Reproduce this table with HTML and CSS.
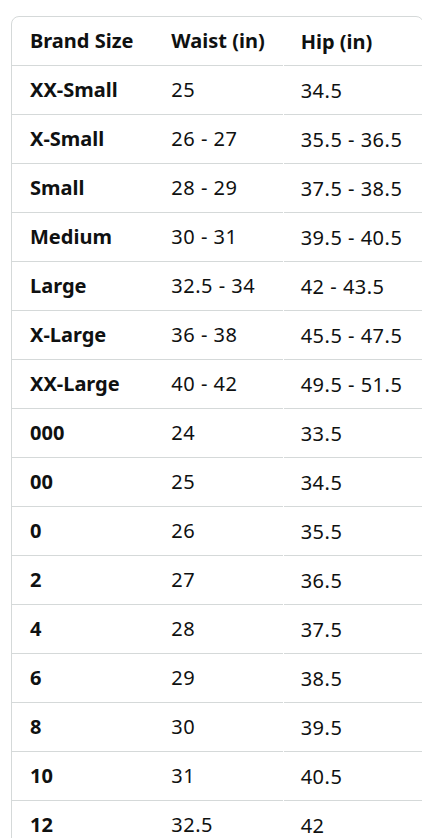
FILE: index.html
```html
<!DOCTYPE html>
<html>
<head>
<meta charset="utf-8">
<link rel="stylesheet" href="styles.css">
</head>
<body>
<div class="page">
  <div class="scroller">
    <table class="size-table">
      <thead>
        <tr><th class="c1">Brand Size</th><th class="c2">Waist (in)</th><th class="c3">Hip (in)</th></tr>
      </thead>
      <tbody>
        <tr><th class="c1">XX-Small</th><td class="c2">25</td><td class="c3">34.5</td></tr>
        <tr><th class="c1">X-Small</th><td class="c2">26 - 27</td><td class="c3">35.5 - 36.5</td></tr>
        <tr><th class="c1">Small</th><td class="c2">28 - 29</td><td class="c3">37.5 - 38.5</td></tr>
        <tr><th class="c1">Medium</th><td class="c2">30 - 31</td><td class="c3">39.5 - 40.5</td></tr>
        <tr><th class="c1">Large</th><td class="c2">32.5 - 34</td><td class="c3">42 - 43.5</td></tr>
        <tr><th class="c1">X-Large</th><td class="c2">36 - 38</td><td class="c3">45.5 - 47.5</td></tr>
        <tr><th class="c1">XX-Large</th><td class="c2">40 - 42</td><td class="c3">49.5 - 51.5</td></tr>
        <tr><th class="c1">000</th><td class="c2">24</td><td class="c3">33.5</td></tr>
        <tr><th class="c1">00</th><td class="c2">25</td><td class="c3">34.5</td></tr>
        <tr><th class="c1">0</th><td class="c2">26</td><td class="c3">35.5</td></tr>
        <tr><th class="c1">2</th><td class="c2">27</td><td class="c3">36.5</td></tr>
        <tr><th class="c1">4</th><td class="c2">28</td><td class="c3">37.5</td></tr>
        <tr><th class="c1">6</th><td class="c2">29</td><td class="c3">38.5</td></tr>
        <tr><th class="c1">8</th><td class="c2">30</td><td class="c3">39.5</td></tr>
        <tr><th class="c1">10</th><td class="c2">31</td><td class="c3">40.5</td></tr>
        <tr><th class="c1">12</th><td class="c2">32.5</td><td class="c3">42</td></tr>
      </tbody>
    </table>
  </div>
</div>
</body>
</html>
```

FILE: styles.css
```css
html, body {
  margin: 0;
  padding: 0;
  background: #ffffff;
}
body {
  font-family: "Noto Sans", "Open Sans", sans-serif;
  color: #0f1111;
  font-size: 20px;
}
.page {
  padding: 16px 0 0 11px;
  height: 822px;
  overflow: hidden;
}
.scroller {
  width: 411px;
  overflow: hidden;
}
.size-table {
  width: 413px;
  border: 1px solid #d5d9d9;
  border-radius: 8px;
  border-collapse: separate;
  border-spacing: 0;
  table-layout: fixed;
}
.size-table th,
.size-table td {
  height: 48px;
  padding: 0 0 0 18px;
  line-height: 24px;
  text-align: left;
  vertical-align: middle;
  white-space: nowrap;
  border-bottom: 1px solid #d5d9d9;
  box-sizing: content-box;
}
.size-table th { font-weight: 700; }
.size-table td { font-weight: 400; letter-spacing: 0.5px; }
.size-table .c1 { width: 123px; }
.size-table .c2 { width: 111px; }
.size-table .c3 {
  width: 122px;
  border-bottom: none;
  background: linear-gradient(#d5d9d9, #d5d9d9) no-repeat 1px 100% / calc(100% - 1px) 1px;
}
```
